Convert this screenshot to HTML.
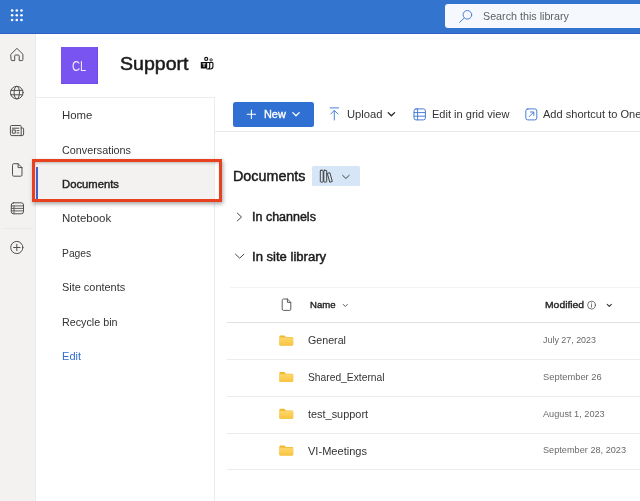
<!DOCTYPE html>
<html lang="en"><head><meta charset="utf-8"><title>Support - Documents</title>
<style>
html,body{margin:0;padding:0}
body{width:640px;height:501px;overflow:hidden;position:relative;background:#fff;font-family:"Liberation Sans",sans-serif}
.a{position:absolute}
.t{position:absolute;white-space:nowrap;line-height:1;transform-origin:0 50%;display:block}
svg{position:absolute;overflow:visible}
.ln{position:absolute;height:1px;background:#ececeb;left:227px;width:413px}
</style></head><body>
<!-- top bar -->
<div class="a" style="left:0;top:0;width:640px;height:33px;background:#3375ce;border-bottom:1px solid #2f5fc6"></div>
<div class="a" style="left:445px;top:3.5px;width:210px;height:24.5px;background:#f5f8fc;border-radius:3px"></div>
<svg style="left:0;top:0" width="40" height="34"><g fill="#fff">
<circle cx="12.1" cy="10.5" r="1.3"/><circle cx="16.8" cy="10.5" r="1.3"/><circle cx="21.5" cy="10.5" r="1.3"/><circle cx="12.1" cy="15.3" r="1.3"/><circle cx="16.8" cy="15.3" r="1.3"/><circle cx="21.5" cy="15.3" r="1.3"/><circle cx="12.1" cy="20.0" r="1.3"/><circle cx="16.8" cy="20.0" r="1.3"/><circle cx="21.5" cy="20.0" r="1.3"/></g></svg>
<svg style="left:455px;top:5px" width="22" height="22"><g fill="none" stroke="#4a7fd6" stroke-width="1" stroke-linecap="round"><circle cx="12.4" cy="9.8" r="4.3"/><path d="M9.3 13 L4.6 17.4"/></g></svg>

<!-- left rail -->
<div class="a" style="left:0;top:34px;width:35px;height:467px;background:#f3f2f1;border-right:1px solid #eceae8"></div>
<div class="a" style="left:3px;top:228px;width:30px;height:1px;background:#eae8e6"></div>
<svg style="left:0;top:34px" width="36" height="240"><g fill="none" stroke="#505050" stroke-width="1" stroke-linejoin="round" stroke-linecap="round">
<!-- home -->
<path d="M11 20.2 L16.9 14.4 L22.9 20.2 V25.6 Q22.9 26.6 21.9 26.6 H19.2 V22 Q19.2 21 18.2 21 H15.7 Q14.7 21 14.7 22 V26.6 H12 Q11 26.6 11 25.6 Z"/>
<!-- globe -->
<circle cx="16.8" cy="58.6" r="6.3"/><ellipse cx="16.8" cy="58.6" rx="2.7" ry="6.3"/><path d="M10.9 56.4 H22.7 M10.9 60.8 H22.7"/>
<!-- news -->
<path d="M10.4 92.5 Q10.4 91.5 11.4 91.5 H20.2 Q21.2 91.5 21.2 92.5 V101.6 H11.9 Q10.4 101.6 10.4 100.1 Z"/><path d="M21.2 94 H22.6 Q23.6 94 23.6 95 V100 Q23.6 101.6 22.2 101.6 H20.5"/>
<path d="M12.3 94.2 H18.9 M12.3 96.3 V99.2 H15.3 V96.3 Z M17 96.6 H18.9 M17 98.9 H18.9"/>
<!-- doc -->
<path d="M12.5 130.9 Q12.5 129.7 13.7 129.7 H18.1 L22 133.6 V141 Q22 142.2 20.8 142.2 H13.7 Q12.5 142.2 12.5 141 Z M18.1 129.7 V133.6 H22"/>
<!-- list -->
<rect x="11.3" y="168.8" width="12.2" height="11" rx="2.2"/><path stroke-width="0.9" d="M11.3 171.9 H23.5 M11.3 174.4 H23.5 M11.3 176.9 H23.5 M14 171.9 V179.8"/>
<!-- plus -->
<circle cx="16.8" cy="213.5" r="6.1"/><path d="M16.8 210.3 V216.7 M13.6 213.5 H20"/>
</g></svg>

<!-- site header -->
<div class="a" style="left:61px;top:47px;width:37px;height:37px;background:#7a54f0;box-shadow:inset -0.5px -0.5px 0 #693fe6"></div>
<svg style="left:199px;top:55px" width="16" height="16">
<g fill="none" stroke="#111" stroke-width="1.15"><circle cx="7.2" cy="3.9" r="1.5"/><circle cx="12.1" cy="4.9" r="1.2" stroke-width="0.85"/>
<path d="M8 7.5 H13.2 Q13.9 7.5 13.9 8.2 V11.6 Q13.9 14 11.5 14 H7.5 M10.7 7.5 V12 Q10.7 14 8.8 14"/></g>
<rect x="1.8" y="7" width="6.4" height="6.6" rx="0.6" fill="#111"/>
<path d="M3.5 8.8 H6.5 M5 8.8 V12" stroke="#fff" stroke-width="0.9" fill="none"/>
</svg>

<!-- nav -->
<div class="a" style="left:36px;top:97px;width:177.5px;height:404px;border-top:1px solid #ececec;border-right:1px solid #ececec;box-sizing:content-box"></div>
<div class="a" style="left:36px;top:162px;width:177.5px;height:38px;background:#f3f2f1"></div>
<div class="a" style="left:36px;top:167px;width:2px;height:32px;background:#3b63d6"></div>
<div class="a" style="left:32px;top:159px;width:184px;height:37px;border:3px solid #e8411f;box-shadow:1px 2px 4px rgba(0,0,0,.35), inset 0 2px 3px -1px rgba(0,0,0,.25)"></div>

<!-- command bar -->
<div class="a" style="left:215px;top:131px;width:425px;height:1px;background:#e9e8e7"></div>
<div class="a" style="left:233px;top:102px;width:81px;height:25px;background:#2f70d2;border-radius:2.5px"></div>
<svg style="left:233px;top:102px" width="81" height="25"><g fill="none" stroke="#fff" stroke-width="1.1" stroke-linecap="round" stroke-linejoin="round"><path d="M14.2 12.2 H22.6 M18.4 8 V16.4"/><path stroke-width="1.3" d="M59.8 10.6 L63 13.8 L66.2 10.6"/></g></svg>
<svg style="left:325px;top:102px" width="240" height="25"><g fill="none" stroke="#3f79d3" stroke-width="0.95" stroke-linecap="round" stroke-linejoin="round">
<path d="M5.2 5.9 H13.6 M9.3 8.6 V18 M5.7 12 L9.3 8.4 L12.9 12"/>
<rect x="89" y="6.9" width="11.4" height="11" rx="2"/><path d="M89 10.6 H100.4 M89 14.2 H100.4 M92.6 6.9 V17.9"/>
<rect x="200.8" y="6.9" width="11" height="11" rx="2"/><path d="M204.2 14.6 L208.6 10.2 M205.4 10 H208.8 V13.4"/>
</g><path d="M63.2 10.6 L66.4 13.8 L69.6 10.6" fill="none" stroke="#222" stroke-width="1.3" stroke-linecap="round" stroke-linejoin="round"/></svg>

<!-- title + pill -->
<div class="a" style="left:312px;top:166px;width:47.5px;height:20px;background:#d6e6f7;border-radius:1.5px"></div>
<svg style="left:312px;top:166px" width="48" height="20"><g fill="none" stroke="#3a3a3a" stroke-width="0.95" stroke-linejoin="round" stroke-linecap="round">
<rect x="8.3" y="4.3" width="2.9" height="11.8" rx="0.7"/><rect x="11.8" y="4.3" width="2.9" height="11.8" rx="0.7"/><path d="M15.7 7.3 L17.9 6.7 L20.3 15.5 L18.1 16.1 Z"/>
<path d="M30.6 9.3 L33.9 12.5 L37.2 9.3"/></g></svg>

<!-- groups -->
<svg style="left:230px;top:205px" width="20" height="60"><g fill="none" stroke="#444" stroke-width="1" stroke-linecap="round" stroke-linejoin="round">
<path d="M7.4 8.2 L11.5 12 L7.4 15.8"/><path d="M5.5 49.2 L9.7 53.2 L13.9 49.2"/></g></svg>

<!-- table lines -->
<div class="ln" style="top:286.5px;left:230px;width:410px;background:#f3f3f2"></div>
<div class="ln" style="top:322px;background:#e2e1e0"></div>
<div class="ln" style="top:358.5px"></div>
<div class="ln" style="top:395.8px"></div>
<div class="ln" style="top:432.5px"></div>
<div class="ln" style="top:469.3px"></div>

<!-- header icons -->
<svg style="left:280px;top:296px" width="340" height="20"><g fill="none" stroke="#555" stroke-width="0.95" stroke-linejoin="round" stroke-linecap="round">
<path d="M2.2 4.2 Q2.2 3 3.4 3 H7.4 L10.8 6.4 V13.2 Q10.8 14.4 9.6 14.4 H3.4 Q2.2 14.4 2.2 13.2 Z M7.4 3 V6.4 H10.8"/>
<path d="M63.2 8.4 L65.3 10.5 L67.4 8.4"/>
<circle cx="311.5" cy="9.1" r="3.9" stroke-width="0.85" stroke="#5a5a5a"/><path d="M311.5 8.6 V11.1 M311.5 6.9 V7.1" stroke-width="0.85" stroke="#5a5a5a"/>
<path stroke="#333" stroke-width="1.05" d="M327.2 8.3 L329.3 10.4 L331.4 8.3"/>
</g></svg>

<!-- folders -->
<svg style="left:279px;top:335px" width="16" height="125"><defs><linearGradient id="fg" x1="0" y1="0" x2="0" y2="1"><stop offset="0" stop-color="#fdd76a"/><stop offset="1" stop-color="#f8c43f"/></linearGradient><g id="fo"><path d="M0.4 1.4 Q0.4 0.4 1.4 0.4 H5.4 L7 2 H13.2 Q14.2 2 14.2 3 V9.4 Q14.2 10.4 13.2 10.4 H1.4 Q0.4 10.4 0.4 9.4 Z" fill="#f0b92f"/><path d="M0.4 3.4 Q0.4 2.6 1.2 2.6 H13.4 Q14.2 2.6 14.2 3.4 V9.4 Q14.2 10.4 13.2 10.4 H1.4 Q0.4 10.4 0.4 9.4 Z" fill="url(#fg)"/></g></defs>
<use href="#fo" y="0"/><use href="#fo" y="36.7"/><use href="#fo" y="73.4"/><use href="#fo" y="110.1"/></svg>

<!-- texts -->
<div id="tx" style="position:absolute;left:0;top:0;width:640px;height:501px;will-change:transform">
<span class="t" style="left:71.90px;top:59px;font-size:14px;font-weight:400;color:#f1ebff;transform:scaleX(0.8000)">CL</span>
<span class="t" style="left:120.46px;top:55px;font-size:18px;font-weight:400;color:#1b1b1b;transform:scaleX(1.0858);-webkit-text-stroke:0.50px #1b1b1b">Support</span>
<span class="t" style="left:62.09px;top:110px;font-size:11px;font-weight:400;color:#333;transform:scaleX(1.0357)">Home</span>
<span class="t" style="left:62.11px;top:145px;font-size:11px;font-weight:400;color:#333;transform:scaleX(0.9802)">Conversations</span>
<span class="t" style="left:62.33px;top:179px;font-size:10.5px;font-weight:400;color:#1f1f1f;transform:scaleX(1.0718);-webkit-text-stroke:0.40px #1f1f1f">Documents</span>
<span class="t" style="left:62.09px;top:213px;font-size:11px;font-weight:400;color:#333;transform:scaleX(1.0443)">Notebook</span>
<span class="t" style="left:62.18px;top:248px;font-size:11px;font-weight:400;color:#333;transform:scaleX(0.9372)">Pages</span>
<span class="t" style="left:62.10px;top:282px;font-size:11px;font-weight:400;color:#333;transform:scaleX(0.9928)">Site contents</span>
<span class="t" style="left:62.14px;top:317px;font-size:11px;font-weight:400;color:#333;transform:scaleX(0.9774)">Recycle bin</span>
<span class="t" style="left:62.12px;top:351px;font-size:11px;font-weight:400;color:#2f6fd0;transform:scaleX(1.0000)">Edit</span>
<span class="t" style="left:264.26px;top:109px;font-size:11px;font-weight:400;color:#fff;transform:scaleX(0.9907);-webkit-text-stroke:0.35px #fff">New</span>
<span class="t" style="left:346.91px;top:109px;font-size:11px;font-weight:400;color:#333;transform:scaleX(1.0195)">Upload</span>
<span class="t" style="left:431.92px;top:109px;font-size:11px;font-weight:400;color:#333;transform:scaleX(1.0049)">Edit in grid view</span>
<span class="t" style="left:543.40px;top:109px;font-size:11px;font-weight:400;color:#333;transform:scaleX(1.0050)">Add shortcut to OneDrive</span>
<span class="t" style="left:482.61px;top:11px;font-size:11px;font-weight:400;color:#606060;transform:scaleX(0.9749)">Search this library</span>
<span class="t" style="left:233.00px;top:169px;font-size:14px;font-weight:400;color:#1b1b1b;transform:scaleX(1.0241);-webkit-text-stroke:0.45px #1b1b1b">Documents</span>
<span class="t" style="left:251.69px;top:211px;font-size:12px;font-weight:400;color:#1c1c1c;transform:scaleX(1.0407);-webkit-text-stroke:0.45px #1c1c1c">In channels</span>
<span class="t" style="left:251.65px;top:251px;font-size:12px;font-weight:400;color:#1c1c1c;transform:scaleX(1.0894);-webkit-text-stroke:0.45px #1c1c1c">In site library</span>
<span class="t" style="left:310.37px;top:301px;font-size:9px;font-weight:400;color:#1f1f1f;transform:scaleX(1.0624);-webkit-text-stroke:0.35px #1f1f1f">Name</span>
<span class="t" style="left:545.02px;top:300px;font-size:9.5px;font-weight:400;color:#1f1f1f;transform:scaleX(1.0896);-webkit-text-stroke:0.35px #1f1f1f">Modified</span>
<span class="t" style="left:308.11px;top:335px;font-size:10.8px;font-weight:400;color:#333;transform:scaleX(0.9879)">General</span>
<span class="t" style="left:308.02px;top:372px;font-size:10.8px;font-weight:400;color:#333;transform:scaleX(0.9514)">Shared_External</span>
<span class="t" style="left:308.37px;top:409px;font-size:10.8px;font-weight:400;color:#333;transform:scaleX(1.0110)">test_support</span>
<span class="t" style="left:308.37px;top:446px;font-size:10.8px;font-weight:400;color:#333;transform:scaleX(1.0241)">VI-Meetings</span>
<span class="t" style="left:542.79px;top:335px;font-size:9.7px;font-weight:400;color:#6a6a6a;transform:scaleX(0.9190)">July 27, 2023</span>
<span class="t" style="left:542.52px;top:372px;font-size:9.7px;font-weight:400;color:#6a6a6a;transform:scaleX(0.9650)">September 26</span>
<span class="t" style="left:543.00px;top:409px;font-size:9.7px;font-weight:400;color:#6a6a6a;transform:scaleX(0.9467)">August 1, 2023</span>
<span class="t" style="left:542.53px;top:445px;font-size:9.7px;font-weight:400;color:#6a6a6a;transform:scaleX(0.9462)">September 28, 2023</span>
</div>
</body></html>
